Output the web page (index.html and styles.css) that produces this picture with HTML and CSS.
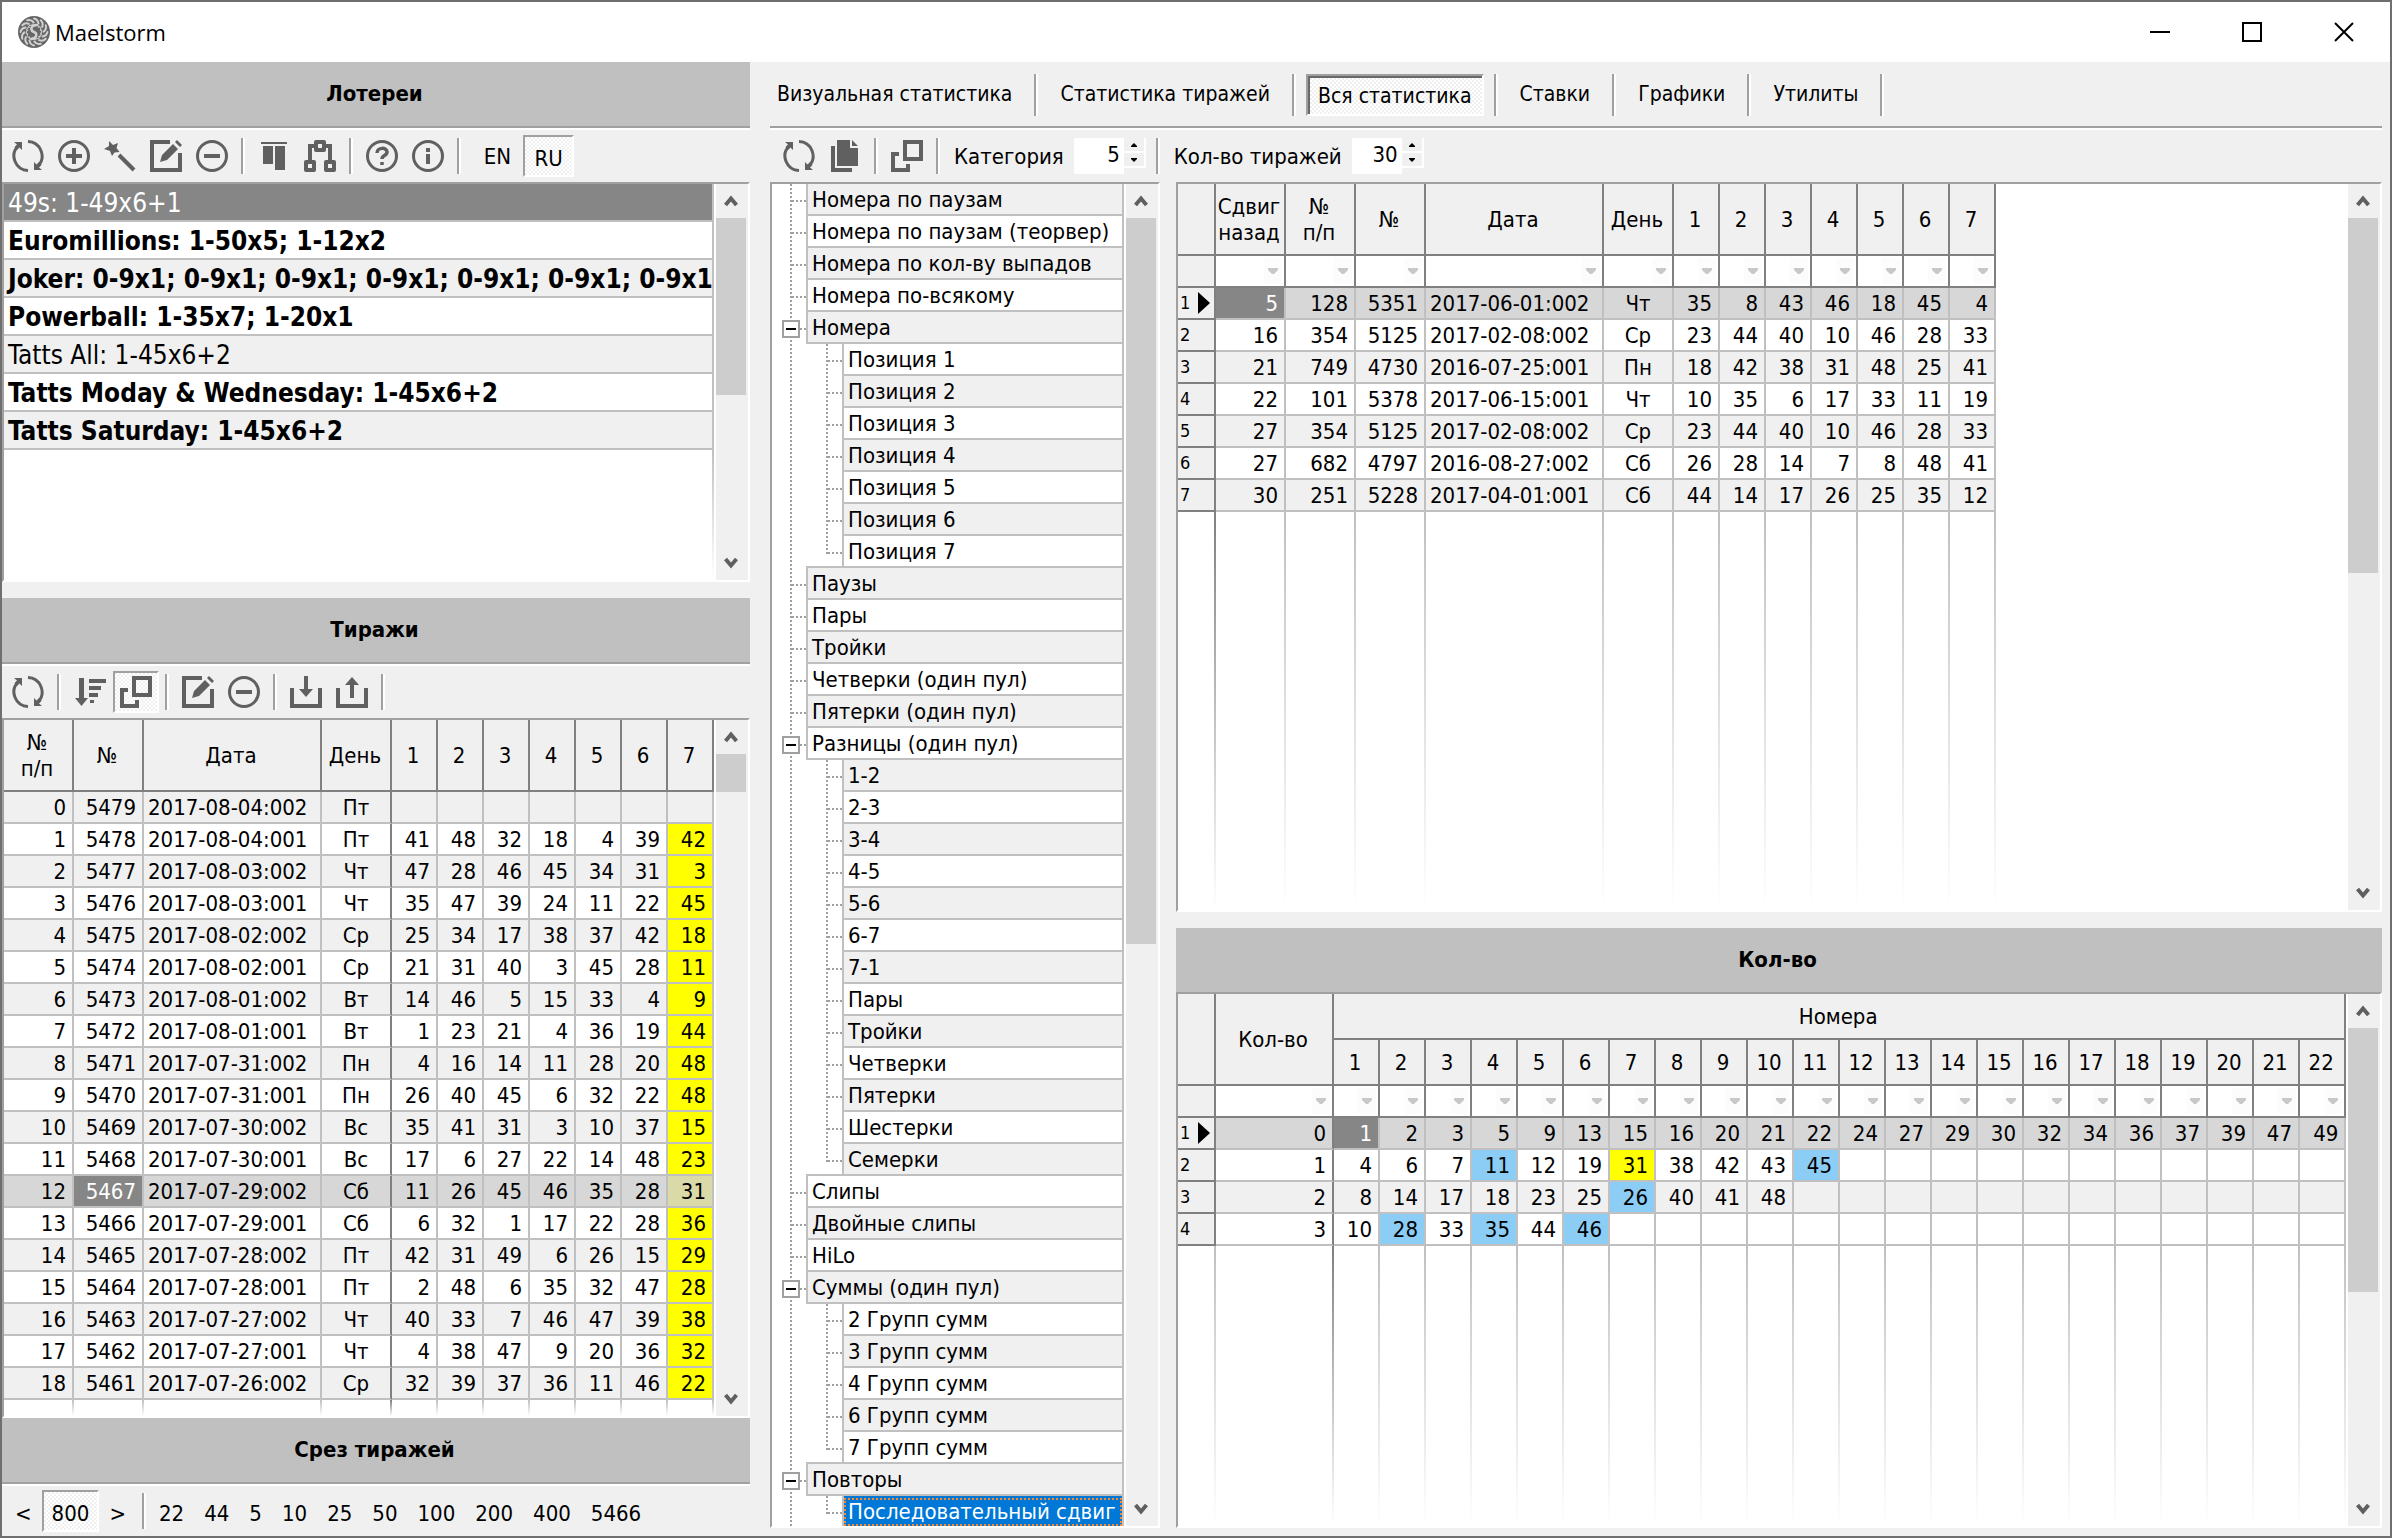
FILE: index.html
```html
<!DOCTYPE html>
<html lang="ru">
<head>
    <meta charset="UTF-8">
    <meta name="viewport" content="width=device-width, initial-scale=1.0">
    <title>Maelstorm</title>
    <link rel="stylesheet" href="styles.css">
</head>
<body>
    <svg width="0" height="0" class="sprite" aria-hidden="true">
        <symbol id="i-refresh" viewBox="0 0 32 32">
            <path d="M16 30.500A14.500 14.500 0 0 1 6 6M16 1.500A14.500 14.500 0 0 1 26 26" fill="none" stroke="currentColor" stroke-width="3"/>
            <path d="M2 2h8v8l-2.500-2.500L5 10 2.500 7 5 4.500zM30 30h-8v-8l2.500 2.500L27 22l2.500 3-2.500 2.500z" fill="currentColor"/>
        </symbol>
        <symbol id="i-add" viewBox="0 0 32 32">
            <circle cx="16" cy="16" r="14.500" fill="none" stroke="currentColor" stroke-width="3"/>
            <path d="M16 8v16M8 16h16" stroke="currentColor" stroke-width="4"/>
        </symbol>
        <symbol id="i-minus" viewBox="0 0 32 32">
            <circle cx="16" cy="16" r="14.500" fill="none" stroke="currentColor" stroke-width="3"/>
            <path d="M8 16h16" stroke="currentColor" stroke-width="4"/>
        </symbol>
        <symbol id="i-wand" viewBox="0 0 32 32">
            <path d="M5 1l4 4 5-2-1.500 5 3 4-5 .5L8 16l-2-5-6-2 5-3z" fill="currentColor"/>
            <path d="M15 15l15 15" stroke="currentColor" stroke-width="4"/>
        </symbol>
        <symbol id="i-edit" viewBox="0 0 32 32">
            <path d="M20 2H2v28h28V13" fill="none" stroke="currentColor" stroke-width="4"/>
            <path d="M10 22l2-7L23 4l5 5-11 11zM25 2l2-2 5 5-2 2z" fill="currentColor"/>
        </symbol>
        <symbol id="i-align" viewBox="0 0 32 32">
            <path d="M3 2h26v2H3zM5 6h10v18H5zM17 6h10v24H17z" fill="currentColor"/>
        </symbol>
        <symbol id="i-net" viewBox="0 0 32 32">
            <path d="M6 20V6h20v14" fill="none" stroke="currentColor" stroke-width="4"/>
            <path d="M12 2h8v8h-8zM2 22h8v8H2zM22 22h8v8h-8z" fill="#f0f0f0" stroke="currentColor" stroke-width="4" stroke-linejoin="round"/>
        </symbol>
        <symbol id="i-help" viewBox="0 0 32 32">
            <circle cx="16" cy="16" r="14.500" fill="none" stroke="currentColor" stroke-width="3"/>
            <path d="M11 13c0-6 10-6 10-1 0 4-5 3-5 7M16 22v3" fill="none" stroke="currentColor" stroke-width="3.500"/>
        </symbol>
        <symbol id="i-info" viewBox="0 0 32 32">
            <circle cx="16" cy="16" r="14.500" fill="none" stroke="currentColor" stroke-width="3"/>
            <path d="M16 8v4M16 14v10" stroke="currentColor" stroke-width="4"/>
        </symbol>
        <symbol id="i-sort" viewBox="0 0 32 32">
            <path d="M5 2h5v20h4l-6.500 8L1 22h4zM15 3h17v4H15zM15 10h12v4H15zM15 17h9v4h-9zM16 24h4v3h-4z" fill="currentColor"/>
        </symbol>
        <symbol id="i-layers" viewBox="0 0 32 32">
            <path d="M14 2h16v17H14zM8 14H2v16h15v-6" fill="none" stroke="currentColor" stroke-width="4"/>
        </symbol>
        <symbol id="i-import" viewBox="0 0 32 32">
            <path d="M2 12v18h28V12M16 0v16" fill="none" stroke="currentColor" stroke-width="4"/>
            <path d="M9 13h14l-7 8z" fill="currentColor"/>
        </symbol>
        <symbol id="i-export" viewBox="0 0 32 32">
            <path d="M2 12v18h28V12M16 22V6" fill="none" stroke="currentColor" stroke-width="4"/>
            <path d="M9 9h14l-7-8z" fill="currentColor"/>
        </symbol>
        <symbol id="i-copy" viewBox="0 0 32 32">
            <path d="M8 0h13v8h8v18H8zM23 0l6 6h-6z" fill="currentColor"/>
            <path d="M4 6v24h19" fill="none" stroke="currentColor" stroke-width="4"/>
        </symbol>
        <symbol id="i-up" viewBox="0 0 14 12"><path d="M1.500 10L7 3.500l5.500 6.500" fill="none" stroke="currentColor" stroke-width="4"/></symbol>
        <symbol id="i-down" viewBox="0 0 14 12"><path d="M1.500 2L7 8.500 12.500 2" fill="none" stroke="currentColor" stroke-width="4"/></symbol>
        <symbol id="i-tri" viewBox="0 0 10 6"><path d="M0 0h10v2L6 6H4L0 2z" fill="currentColor"/></symbol>
        <symbol id="i-more" viewBox="0 0 6 4"><path d="M0 4V3l3-3 3 3v1z" fill="currentColor"/></symbol>
        <symbol id="i-less" viewBox="0 0 6 4"><path d="M0 0v1l3 3 3-3V0z" fill="currentColor"/></symbol>
    </svg>

    <div class="window">
        <header class="titlebar">
            <svg class="logo" viewBox="0 0 32 32" id="logo"><circle cx="16" cy="16" r="16" fill="#666"/></svg>
            <h1>Maelstorm</h1>
            <div class="window-buttons">
                <button aria-label="Свернуть"><svg width="20" height="20"><path d="M0 10h20" stroke="#000" stroke-width="2"/></svg></button>
                <button aria-label="Развернуть"><svg width="20" height="20"><path d="M1 1h18v18H1z" fill="none" stroke="#000" stroke-width="2"/></svg></button>
                <button aria-label="Закрыть"><svg width="20" height="20"><path d="M1 1l18 18M19 1L1 19" stroke="#000" stroke-width="2"/></svg></button>
            </div>
        </header>

        <main class="content">
            <section class="left">
                <h2 class="caption">Лотереи</h2>
                <div class="toolbar">
                    <button aria-label="Обновить"><svg><use href="#i-refresh"/></svg></button>
                    <button aria-label="Добавить"><svg><use href="#i-add"/></svg></button>
                    <button aria-label="Мастер"><svg><use href="#i-wand"/></svg></button>
                    <button aria-label="Изменить"><svg><use href="#i-edit"/></svg></button>
                    <button aria-label="Удалить"><svg><use href="#i-minus"/></svg></button>
                    <span class="sep"></span>
                    <button aria-label="Панели"><svg><use href="#i-align"/></svg></button>
                    <button aria-label="Связи"><svg><use href="#i-net"/></svg></button>
                    <span class="sep"></span>
                    <button aria-label="Справка"><svg><use href="#i-help"/></svg></button>
                    <button aria-label="О программе"><svg><use href="#i-info"/></svg></button>
                    <span class="sep"></span>
                    <div class="langs">
                        <button>EN</button>
                        <button class="pressed">RU</button>
                    </div>
                </div>
                <div class="box lottery-box">
                    <ul class="lotteries">
                        <li class="selected">49s: 1-49x6+1</li>
                        <li class="bold">Euromillions: 1-50x5; 1-12x2</li>
                        <li class="bold">Joker: 0-9x1; 0-9x1; 0-9x1; 0-9x1; 0-9x1; 0-9x1; 0-9x1</li>
                        <li class="bold">Powerball: 1-35x7; 1-20x1</li>
                        <li>Tatts All: 1-45x6+2</li>
                        <li class="bold">Tatts Moday &amp; Wednesday: 1-45x6+2</li>
                        <li class="bold">Tatts Saturday: 1-45x6+2</li>
                        <li class="rest"></li>
                    </ul>
                    <div class="scroll" data-thumb="54"></div>
                </div>

                <h2 class="caption spaced">Тиражи</h2>
                <div class="toolbar">
                    <button aria-label="Обновить"><svg><use href="#i-refresh"/></svg></button>
                    <span class="sep"></span>
                    <button aria-label="Сортировка"><svg><use href="#i-sort"/></svg></button>
                    <button class="pressed" aria-label="Связать"><svg><use href="#i-layers"/></svg></button>
                    <span class="sep"></span>
                    <button aria-label="Изменить"><svg><use href="#i-edit"/></svg></button>
                    <button aria-label="Удалить"><svg><use href="#i-minus"/></svg></button>
                    <span class="sep"></span>
                    <button aria-label="Импорт"><svg><use href="#i-import"/></svg></button>
                    <button aria-label="Экспорт"><svg><use href="#i-export"/></svg></button>
                    <span class="sep"></span>
                </div>
                <div class="box grow">
                    <div class="grid-wrap"><table class="grid" id="draws"></table></div>
                    <div class="scroll" data-thumb="6"></div>
                </div>

                <h2 class="caption">Срез тиражей</h2>
                <div class="toolbar slices">
                    <button>&lt;</button>
                    <button class="pressed">800</button>
                    <button>&gt;</button>
                    <span class="sep"></span>
                    <button>22</button>
                    <button>44</button>
                    <button>5</button>
                    <button>10</button>
                    <button>25</button>
                    <button>50</button>
                    <button>100</button>
                    <button>200</button>
                    <button>400</button>
                    <button>5466</button>
                </div>
            </section>

            <section class="right">
                <nav class="tabs">
                    <button>Визуальная статистика</button><span class="sep"></span>
                    <button>Статистика тиражей</button><span class="sep"></span>
                    <button class="pressed">Вся статистика</button><span class="sep"></span>
                    <button>Ставки</button><span class="sep"></span>
                    <button>Графики</button><span class="sep"></span>
                    <button>Утилиты</button><span class="sep"></span>
                </nav>
                <div class="toolbar options">
                    <button aria-label="Обновить"><svg><use href="#i-refresh"/></svg></button>
                    <button aria-label="Копировать"><svg><use href="#i-copy"/></svg></button>
                    <span class="sep"></span>
                    <button aria-label="Связать"><svg><use href="#i-layers"/></svg></button>
                    <span class="sep"></span>
                    <label for="category">Категория</label>
                    <input id="category" type="text" value="5">
                    <span class="spin">
                        <button aria-label="Больше"><svg><use href="#i-more"/></svg></button>
                        <button aria-label="Меньше"><svg><use href="#i-less"/></svg></button>
                    </span>
                    <span class="sep"></span>
                    <label for="count">Кол-во тиражей</label>
                    <input id="count" type="text" value="30">
                    <span class="spin">
                        <button aria-label="Больше"><svg><use href="#i-more"/></svg></button>
                        <button aria-label="Меньше"><svg><use href="#i-less"/></svg></button>
                    </span>
                </div>
                <div class="panes">
                    <div class="box tree-box">
                        <ul class="tree" id="tree"></ul>
                        <div class="scroll" data-thumb="57"></div>
                    </div>
                    <div class="stats">
                        <div class="box shifts-box">
                            <div class="grid-wrap"><table class="grid" id="shifts"></table></div>
                            <div class="scroll" data-thumb="54"></div>
                        </div>
                        <h2 class="caption flat spaced">Кол-во</h2>
                        <div class="box grow">
                            <div class="grid-wrap"><table class="grid" id="counts"></table></div>
                            <div class="scroll" data-thumb="57"></div>
                        </div>
                    </div>
                </div>
            </section>
        </main>
    </div>
    <script src="script.js"></script>
</body>
</html>
```

FILE: styles.css
```css
* { box-sizing: border-box; }
body { margin: 0; background: #f0f0f0; color: #000; font: 22px/26px "DejaVu Sans Condensed", "DejaVu Sans", sans-serif; }
button, input { font: inherit; color: inherit; }
button { border: 2px solid transparent; background: none; padding: 0; }
h1, h2, ul { margin: 0; padding: 0; font-size: inherit; }
ul { list-style: none; }
svg { display: block; }
.sprite { position: absolute; }

.window { height: 100vh; display: flex; flex-direction: column; border: 2px solid #6f6f6f; }
.titlebar { display: flex; align-items: center; height: 60px; flex: none; background: #fff; padding-left: 16px; }
.titlebar h1 { flex: 1; margin-left: 5px; font: 22px/30px "Open Sans", "Noto Sans", sans-serif; }
.logo { width: 32px; height: 32px; }
.window-buttons { display: flex; }
.window-buttons button { width: 92px; height: 56px; display: flex; align-items: center; justify-content: center; }

.content { flex: 1; min-height: 0; display: flex; }
.left { width: 748px; flex: none; display: flex; flex-direction: column; }
.right { flex: 1; min-width: 0; display: flex; flex-direction: column; padding: 0 8px 8px 20px; }

.caption { flex: none; height: 68px; padding: 19px 3px 0 0; text-align: center; font-weight: bold; background: #c0c0c0;
           border-bottom: 2px solid #fff; box-shadow: inset 0 -2px 0 #a0a0a0; }
.caption.flat { height: 64px; border: 0; box-shadow: none; }
.caption.spaced { margin-top: 16px; }

.toolbar { flex: none; display: flex; align-items: center; height: 52px; padding-left: 3px; color: #606060; }
.toolbar svg { width: 32px; height: 32px; }
.toolbar button { width: 46px; height: 42px; display: flex; align-items: center; justify-content: center; }
.langs { display: flex; margin-left: 5px; color: #000; }
.toolbar .langs button { width: 51px; padding-top: 2px; }
.toolbar .langs .pressed { padding-top: 6px; }
.toolbar.options { padding-left: 6px; }
.toolbar label { color: #000; padding: 2px 10px 0 8px; }
.toolbar input { width: 50px; height: 36px; border: 0; padding: 0 4px 3px; background: #fff; color: #000; text-align: right; }
.sep { flex: none; width: 4px; height: 36px; margin: 0 6px; border-left: 2px solid #a0a0a0; border-right: 2px solid #fff; }
.pressed { border-color: #a0a0a0 #fff #fff #a0a0a0; background: repeating-conic-gradient(#fff 0 25%, #f0f0f0 0 50%) 0 0 / 4px 4px; }
.spin { display: flex; flex-direction: column; height: 36px; margin-right: 4px; }
.toolbar .spin button { width: 22px; height: 15px; border: 0; border-right: 2px solid #fff; border-bottom: 2px solid #fff; color: #000; }
.toolbar .spin svg { width: 6px; height: 4px; }
.toolbar.slices { height: 50px; color: #000; }
.slices button { width: auto; padding: 5px 8px 0; }
.slices .sep { margin-right: 3px; }

.tabs { flex: none; display: flex; align-items: center; height: 68px; font-size: 21px; border-bottom: 2px solid #fff; box-shadow: inset 0 -2px 0 #a0a0a0; }
.tabs button { height: 42px; padding: 0 10px 2px; margin: 0 4px; }
.tabs button:first-child { margin-left: 0; padding-left: 5px; }
.tabs .sep { height: 42px; }
.tabs .pressed { padding: 2px 10px 0; box-shadow: inset 2px 2px 0 #696969; }

.box { display: flex; min-height: 0; background: #fff; border: 2px solid #fff; border-top-color: #a0a0a0; border-left-color: #a0a0a0; }
.grow { flex: 1; }
.lottery-box { height: 400px; flex: none; }
.lotteries { flex: 1; min-width: 0; margin-right: 2px; display: flex; flex-direction: column; font-size: 26px; }
.lotteries li { height: 38px; flex: none; padding: 4px 0 0 4px; line-height: 30px; white-space: nowrap; overflow: hidden;
                border-bottom: 2px solid #c0c0c0; border-right: 2px solid #c0c0c0; }
.lotteries li:nth-child(odd) { background: #f0f0f0; }
.lotteries .bold { font-weight: bold; }
.lotteries li.selected { background: #868686; color: #fff; }
.lotteries li.rest { flex: 1; border: 0; background: linear-gradient(#c0c0c0, #fff) right / 2px 100% no-repeat; }

.scroll { flex: none; width: 32px; background: #f0f0f0; display: flex; flex-direction: column; color: #606060; }
.scroll button { height: 34px; display: flex; align-items: center; justify-content: center; padding-right: 2px; }
.scroll button svg { width: 14px; height: 12px; }
.track { flex: 1; min-height: 0; }
.thumb { width: 30px; background: #cdcdcd; }

.grid-wrap { flex: 1; min-width: 0; overflow: hidden; }
.grid { height: 100%; table-layout: fixed; border-spacing: 0; width: 0; }
.grid th, .grid td { padding: 0; border: solid #c0c0c0; border-width: 0 2px 2px 0; white-space: nowrap; }
.grid th { padding: 2px 2px 0 0; font-weight: normal; background: #f0f0f0; border-color: #808080; }
.grid .head { height: 72px; }
.grid .half { height: 46px; }
.grid .line { height: 32px; }
.grid .line td { text-align: right; padding: 2px 6px 0 0; line-height: 24px; }
.grid .line .date { text-align: left; padding: 2px 0 0 4px; }
.grid .line .day { text-align: center; padding: 2px 0 0; }
.grid .odd td { background: #f0f0f0; }
.grid .current td { background: #d7d7d7; }
.grid .line td.bonus, .grid .line td.hit { background: #ffff00; }
.grid .line td.near { background: #8bcdf5; }
.grid .current td.bonus { background: #dadaa8; }
.grid .line td.focus { background: #868686; color: #fff; }
.grid td.edge { border-right-color: #808080; }
.grid .num { text-align: left; padding: 0 0 0 2px; font-size: 18px; line-height: 24px; }
.num span { display: flex; align-items: center; justify-content: space-between; padding-right: 4px; }
.num i { border-left: 12px solid #000; border-top: 11px solid transparent; border-bottom: 11px solid transparent; }
.grid .filter td { border-color: #808080; padding: 0 2px 0 0; }
.filter button { display: flex; align-items: center; justify-content: center; width: 18px; height: 26px; margin-left: auto; border: 0; background: #fcfcfc; color: #c8c8c8; }
.filter svg { width: 10px; height: 6px; }
.grid .rest td { border: 0; background: linear-gradient(#c0c0c0, #fff) right / 2px 100% no-repeat; }
.grid .rest td.edge { background-image: linear-gradient(#808080, #fff); }

.panes { flex: 1; min-height: 0; display: flex; gap: 16px; }
.stats { flex: 1; min-width: 0; display: flex; flex-direction: column; }
.shifts-box { flex: none; height: 730px; }

.tree-box { width: 390px; flex: none; }
.tree { flex: 1; min-width: 0; margin-right: 2px; overflow: hidden; }
.tree li { display: flex; height: 32px; --dots: repeating-linear-gradient(#a0a0a0 0 2px, transparent 2px 4px); --dash: repeating-linear-gradient(90deg, #a0a0a0 0 2px, transparent 2px 4px); }
.lead { flex: none; width: 34px; padding: 8px 0 0 10px;
        background: var(--dots) 18px 0 / 2px 100% no-repeat, var(--dash) 20px 16px / 14px 2px no-repeat; }
.child .lead { width: 70px;
               background: var(--dots) 18px 0 / 2px 100% no-repeat, var(--dots) 54px 0 / 2px 100% no-repeat, var(--dash) 56px 16px / 14px 2px no-repeat; }
.last .lead { background-size: 2px 100%, 2px 18px, 14px 2px; }
.lead button { display: block; width: 18px; height: 18px; border: 2px solid #a0a0a0; background: linear-gradient(#000, #000) center / 10px 2px no-repeat #fff; }
.cell { flex: 1; min-width: 0; padding: 3px 0 0 4px; white-space: nowrap; background: #fff; border: solid #c0c0c0; border-width: 0 2px 2px; box-shadow: 0 -2px 0 #c0c0c0; }
.tree li:nth-child(odd) .cell { background: #f0f0f0; }
.tree li.selected .cell { background: #0078d7; color: #fff; border-color: #c0c0c0 #c0c0c0 #0078d7; outline: 2px dotted #ff8728; outline-offset: -4px; }
```

FILE: script.js
```js
const draws = `0 5479 2017-08-04:002 Пт
1 5478 2017-08-04:001 Пт 41 48 32 18 4 39 42
2 5477 2017-08-03:002 Чт 47 28 46 45 34 31 3
3 5476 2017-08-03:001 Чт 35 47 39 24 11 22 45
4 5475 2017-08-02:002 Ср 25 34 17 38 37 42 18
5 5474 2017-08-02:001 Ср 21 31 40 3 45 28 11
6 5473 2017-08-01:002 Вт 14 46 5 15 33 4 9
7 5472 2017-08-01:001 Вт 1 23 21 4 36 19 44
8 5471 2017-07-31:002 Пн 4 16 14 11 28 20 48
9 5470 2017-07-31:001 Пн 26 40 45 6 32 22 48
10 5469 2017-07-30:002 Вс 35 41 31 3 10 37 15
11 5468 2017-07-30:001 Вс 17 6 27 22 14 48 23
12 5467 2017-07-29:002 Сб 11 26 45 46 35 28 31
13 5466 2017-07-29:001 Сб 6 32 1 17 22 28 36
14 5465 2017-07-28:002 Пт 42 31 49 6 26 15 29
15 5464 2017-07-28:001 Пт 2 48 6 35 32 47 28
16 5463 2017-07-27:002 Чт 40 33 7 46 47 39 38
17 5462 2017-07-27:001 Чт 4 38 47 9 20 36 32
18 5461 2017-07-26:002 Ср 32 39 37 36 11 46 22`;

const shifts = `5 128 5351 2017-06-01:002 Чт 35 8 43 46 18 45 4
16 354 5125 2017-02-08:002 Ср 23 44 40 10 46 28 33
21 749 4730 2016-07-25:001 Пн 18 42 38 31 48 25 41
22 101 5378 2017-06-15:001 Чт 10 35 6 17 33 11 19
27 354 5125 2017-02-08:002 Ср 23 44 40 10 46 28 33
27 682 4797 2016-08-27:002 Сб 26 28 14 7 8 48 41
30 251 5228 2017-04-01:001 Сб 44 14 17 26 25 35 12`;

const counts = `0 1 2 3 5 9 13 15 16 20 21 22 24 27 29 30 32 34 36 37 39 47 49
1 4 6 7 11 12 19 31 38 42 43 45
2 8 14 17 18 23 25 26 40 41 48
3 10 28 33 35 44 46`;

// "-" opens a branch, ">" is a child of the last branch
const tree = ["Номера по паузам", "Номера по паузам (теорвер)", "Номера по кол-ву выпадов", "Номера по-всякому",
    "-Номера", ">Позиция 1", ">Позиция 2", ">Позиция 3", ">Позиция 4", ">Позиция 5", ">Позиция 6", ">Позиция 7",
    "Паузы", "Пары", "Тройки", "Четверки (один пул)", "Пятерки (один пул)",
    "-Разницы (один пул)", ">1-2", ">2-3", ">3-4", ">4-5", ">5-6", ">6-7", ">7-1",
    ">Пары", ">Тройки", ">Четверки", ">Пятерки", ">Шестерки", ">Семерки",
    "Слипы", "Двойные слипы", "HiLo",
    "-Суммы (один пул)", ">2 Групп сумм", ">3 Групп сумм", ">4 Групп сумм", ">6 Групп сумм", ">7 Групп сумм",
    "-Повторы", ">Последовательный сдвиг"];

const range = n => Array.from({ length: n }, (_, i) => i + 1);
const parse = text => text.split("\n").map(line => line.split(" "));
const cols = widths => "<colgroup>" + widths.map(w => `<col style="width:${w}px">`).join("") + "</colgroup>";
const heads = names => names.map(n => `<th>${n}</th>`).join("");
const filterButton = '<button aria-label="Фильтр"><svg><use href="#i-tri"/></svg></button>';

function filterRow(n) {
    return '<tr class="line filter"><th></th>' + `<td>${filterButton}</td>`.repeat(n) + "</tr>";
}

function restRow(n, edge) {
    return '<tr class="rest">' + range(n).map(i => `<td class="${i === edge ? "edge" : ""}"></td>`).join("") + "</tr>";
}

function bodyRows(rows, opt) {
    return rows.map((row, r) => {
        let cls = "line" + (r % 2 === 0 ? " odd" : "") + (r === opt.current ? " current" : "");
        let html = `<tr class="${cls}">`;
        if (opt.numbered) html += `<th class="num"><span>${r + 1}${r === opt.current ? "<i></i>" : ""}</span></th>`;
        for (let c = 0; c < opt.size; c++) {
            html += `<td class="${opt.style(row[c] || "", r, c)}">${row[c] || ""}</td>`;
        }
        return html + "</tr>";
    }).join("");
}

const balls = Array(7).fill(46);

document.getElementById("draws").innerHTML = cols([70, 70, 178, 70, ...balls]) +
    '<tr class="head">' + heads(["№<br>п/п", "№", "Дата", "День", ...range(7)]) + "</tr>" +
    bodyRows(parse(draws), {
        size: 11, current: 12,
        style: (v, r, c) => [c === 2 && "date", c === 3 && "day edge", c === 10 && v && "bonus", r === 12 && c === 1 && "focus"].filter(Boolean).join(" ")
    }) + restRow(11, 4);

document.getElementById("shifts").innerHTML = cols([38, 70, 70, 70, 178, 70, ...balls]) +
    '<tr class="head">' + heads(["", "Сдвиг<br>назад", "№<br>п/п", "№", "Дата", "День", ...range(7)]) + "</tr>" +
    filterRow(12) +
    bodyRows(parse(shifts), {
        size: 12, current: 0, numbered: true,
        style: (v, r, c) => [c === 3 && "date", c === 4 && "day", r === 0 && c === 0 && "focus"].filter(Boolean).join(" ")
    }) + restRow(13, 1);

const near = ["11", "45", "26", "28", "35", "46"];
document.getElementById("counts").innerHTML = cols([38, 118, ...Array(22).fill(46)]) +
    '<tr class="half"><th rowspan="2"></th><th rowspan="2">Кол-во</th><th colspan="22">Номера</th></tr>' +
    '<tr class="half">' + heads(range(22)) + "</tr>" +
    filterRow(23) +
    bodyRows(parse(counts), {
        size: 23, current: 0, numbered: true,
        style: (v, r, c) => [c === 0 && "edge", c > 0 && near.includes(v) && "near", v === "31" && "hit", r === 0 && c === 1 && "focus"].filter(Boolean).join(" ")
    }) + restRow(24, 2);

document.getElementById("tree").innerHTML = tree.map((item, i) => {
    let child = item[0] === ">";
    let branch = item[0] === "-";
    let last = child && (!tree[i + 1] || tree[i + 1][0] !== ">");
    let cls = (child ? "child " : "") + (last ? "last " : "") + (i === tree.length - 1 ? "selected" : "");
    let toggle = branch ? '<button aria-label="Свернуть"></button>' : "";
    return `<li class="${cls}"><span class="lead">${toggle}</span><span class="cell">${child || branch ? item.slice(1) : item}</span></li>`;
}).join("");

document.querySelectorAll(".scroll").forEach(el => {
    el.innerHTML = '<button aria-label="Вверх"><svg><use href="#i-up"/></svg></button>' +
        `<div class="track"><div class="thumb" style="height:${el.dataset.thumb}%"></div></div>` +
        '<button aria-label="Вниз"><svg><use href="#i-down"/></svg></button>';
});

// Logo whirl: two rings of curved light blades around an S-shaped core
let blades = "";
for (let a = 0; a < 360; a += 30) {
    blades += `<path d="M16 2.500q4 1 4.500 5" transform="rotate(${a} 16 16)" stroke-width="2"/>`;
    blades += `<path d="M16 8q3 .5 3.500 2.500" transform="rotate(${a + 15} 16 16)" stroke-width="1"/>`;
}
document.getElementById("logo").innerHTML += `<g fill="none" stroke="#d0d0d0" stroke-linecap="round">${blades}<path d="M19 9c-8 1-6 6-3 7s4 6-3 7" stroke-width="2.500"/></g>`;
```
